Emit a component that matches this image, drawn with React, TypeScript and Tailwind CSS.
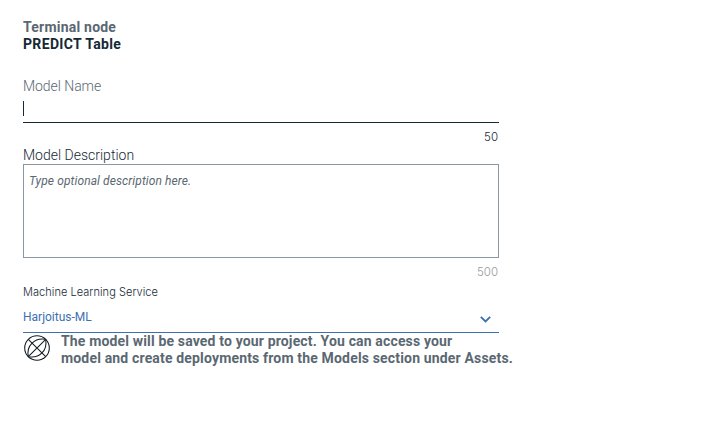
import React from "react";

function GlobeIcon() {
  return (
    <svg className="mt-[2px] ml-px h-[26px] w-[26px] shrink-0" viewBox="0 0 26 26" fill="none" stroke="#111c22" strokeWidth="1.05">
      <circle cx="13" cy="13" r="12.3" />
      <path d="M4.3 4.3 21.700 21.700M4.3 21.700 21.700 4.3" />
      <path d="M4.3 21.700C3.2 15.500 5 11 8.100 8.100C11 5.100 16 3.200 21.700 4.300C22.800 10.500 21 15 17.900 17.900C15 20.900 10 22.800 4.300 21.700Z" />
    </svg>
  );
}

function Chevron() {
  return (
    <svg className="mt-[7px] mr-[8px] h-[7px] w-[11px]" viewBox="0 0 11 7" fill="none" stroke="#3d70b2" strokeWidth="1.8">
      <path d="M0.800 0.800 5.500 5.400 10.200 0.800" />
    </svg>
  );
}

export default function App() {
  return (
    <main className="h-[435px] w-[719px] overflow-hidden bg-white pt-[19px] pl-[23px] font-['Roboto','Liberation_Sans',sans-serif] whitespace-nowrap text-[#152935]">
      <header className="text-[14px] leading-[17px] font-bold">
        <p className="tracking-[0.22px] text-[#5a6872]">Terminal node</p>
        <h1 className="tracking-[0.34px]">PREDICT Table</h1>
      </header>

      <section className="mt-[23px] w-[476px]">
        <label className="block h-[21px] text-[14px] leading-[20px] font-light tracking-[-0.05px] text-[#5a6872]">Model Name</label>
        <div className="h-[26px] border-b border-[#152935] pt-[4px]">
          <div className="h-[15px] w-px bg-[#152935]" />
        </div>
        <p className="mt-[6px] h-[17px] pr-px text-right font-['Inter',sans-serif] text-[11.5px] leading-[17px] font-light">50</p>
      </section>

      <section className="w-[476px]">
        <label className="block h-[18px] text-[14px] leading-[18px] font-light">Model Description</label>
        <div className="h-[94px] border border-[#8897a2] px-[5px] pt-[8px] text-[12px] leading-[17px] tracking-[0.1px] text-[#5a6872] italic">Type optional description here.</div>
        <p className="mt-[5px] h-[18px] pr-px text-right font-['Inter',sans-serif] text-[11.5px] leading-[18px] font-light text-[#999999]">500</p>
      </section>

      <section className="mt-[2px] w-[476px]">
        <label className="block h-[19px] font-['Inter',sans-serif] text-[11px] leading-[18px] font-light tracking-[0.05px]">Machine Learning Service</label>
        <div className="flex h-[31px] justify-between border-b border-[#3d70b2] pt-[7px] text-[12px] leading-[16px] text-[#3d70b2]">
          <span>Harjoitus-ML</span>
          <Chevron />
        </div>
      </section>

      <section className="flex">
        <GlobeIcon />
        <div className="ml-[11px] text-[14px] leading-[17px] font-bold text-[#5a6872]">
          <p className="tracking-[0.155px]">The model will be saved to your project. You can access your</p>
          <p className="tracking-[0.165px]">model and create deployments from the Models section under Assets.</p>
        </div>
      </section>
    </main>
  );
}
